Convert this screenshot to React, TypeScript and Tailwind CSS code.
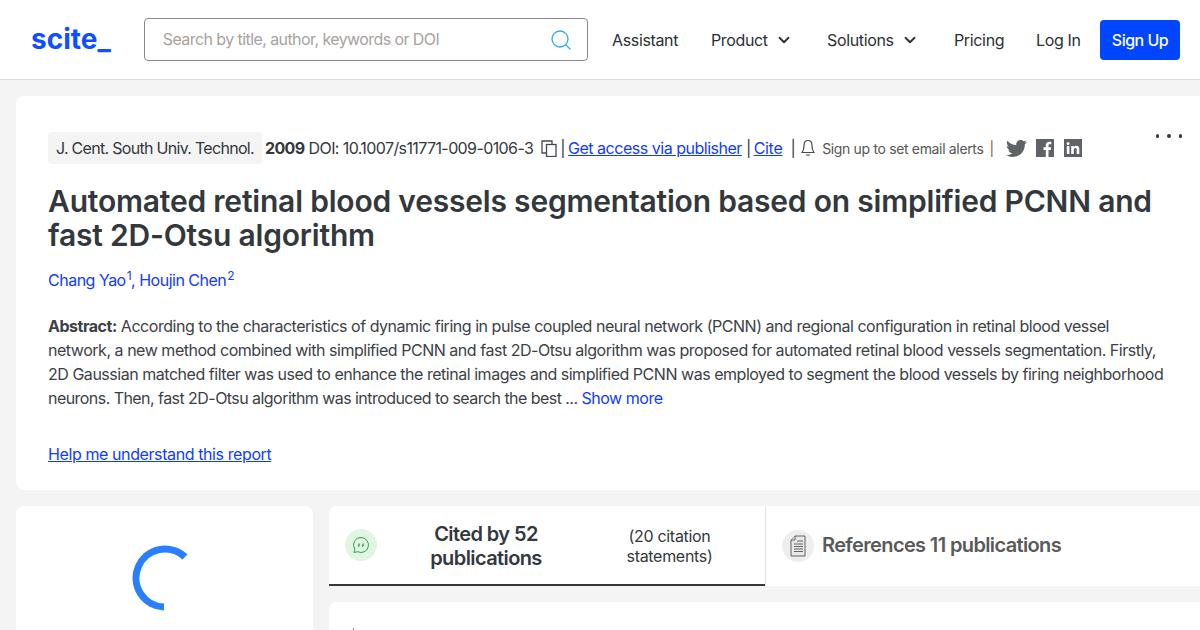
import { Search, ChevronDown } from 'lucide-react';
import { FaTwitter } from 'react-icons/fa';

const font = { fontFamily: 'Inter, sans-serif' };

function Header() {
  return (
    <header className="h-[80px] bg-white border-b border-[#dcdcdc] flex items-center pl-[31px] pr-5">
      <div className="w-[113px] text-[28px] font-bold text-[#0f4fff] leading-none pb-[2px]">scite_</div>
      <div className="w-[445px] h-[43px] border border-[#8a8a8a] rounded flex items-center justify-between pl-[18px] pr-[14px]">
        <span className="text-[16px] tracking-[-0.58px] text-[#a8a29e] pb-[2px]">Search by title, author, keywords or DOI</span>
        <Search size={24} strokeWidth={1.3} className="text-[#2ea8f5]" />
      </div>
      <nav className="flex items-center ml-[24px] text-[16px] tracking-[-0.35px] text-[#2b2f33]">
        <span className="w-[99px]">Assistant</span>
        <span className="w-[116px] flex items-center">Product <ChevronDown size={18} strokeWidth={2.4} className="ml-[7px]" /></span>
        <span className="w-[127px] flex items-center">Solutions <ChevronDown size={18} strokeWidth={2.4} className="ml-[7px]" /></span>
        <span className="w-[82px]">Pricing</span>
        <span className="w-[64px]">Log In</span>
        <span className="w-[80px] h-[40px] bg-[#0045ff] rounded text-white font-medium tracking-[-0.5px] flex items-center justify-center">Sign Up</span>
      </nav>
    </header>
  );
}

function CopyIcon() {
  return (
    <svg width="16" height="17" viewBox="0 0 16 17" fill="none" stroke="#44494e" strokeWidth="1.3" className="ml-2">
      <path d="M5 13H1V1h10v3" />
      <rect x="5.500" y="4.500" width="9.500" height="12" />
    </svg>
  );
}

function BellIcon() {
  return (
    <svg width="14" height="18" viewBox="0 0 14 18" fill="none" stroke="#44494e" strokeWidth="1.2" className="ml-[6px]">
      <path d="M7 1.500c-2.600 0-3.900 2-3.900 4.400 0 3.400-.6 5.600-2 7.600h11.800c-1.400-2-2-4.200-2-7.600C10.900 3.500 9.600 1.500 7 1.500z" />
      <path d="M5.300 15.500c.4 1 3 1 3.400 0" />
    </svg>
  );
}

function FacebookIcon() {
  return (
    <svg width="18" height="18" viewBox="0 0 18 18" className="ml-[9px]">
      <rect width="18" height="18" fill="#5f6368" />
      <path d="M12.500 18v-7h2.300l.4-2.700h-2.700V6.600c0-.8.3-1.300 1.400-1.300h1.400V2.900c-.3 0-1.100-.1-2-.1-2.100 0-3.500 1.300-3.500 3.500v2H7.500V11h2.300v7z" fill="#fff" />
    </svg>
  );
}

function LinkedinIcon() {
  return (
    <svg width="18" height="18" viewBox="0 0 18 18" className="ml-[10px]">
      <rect width="18" height="18" fill="#5f6368" />
      <path d="M2.800 7h2.600v8H2.800zM4.100 3a1.500 1.500 0 1 1 0 3 1.500 1.500 0 0 1 0-3zM7.200 7h2.500v1.100c.4-.7 1.300-1.300 2.600-1.300 2.500 0 3 1.600 3 3.800V15h-2.600v-3.900c0-1 0-2.100-1.300-2.100s-1.600 1-1.600 2V15H7.200z" fill="#fff" />
    </svg>
  );
}

function MetaRow() {
  return (
    <div className="flex items-center text-[16px] tracking-[-0.6px] text-[#33383d] h-[32px] relative">
      <span className="bg-[#f4f4f4] rounded h-[32px] flex items-center px-2 mr-[3px] tracking-[-0.7px]">J. Cent. South Univ. Technol.</span>
      <span className="font-bold">2009</span>
      <span className="ml-1">DOI: 10.1007/s11771-009-0106-3</span>
      <CopyIcon />
      <span className="ml-[3px]">|</span>
      <a className="ml-[3px] text-[#0f3cff] underline tracking-[-0.48px]">Get access via publisher</a>
      <span className="ml-1">|</span>
      <a className="ml-[3px] text-[#0f3cff] underline tracking-[-0.3px]">Cite</a>
      <span className="ml-2">|</span>
      <BellIcon />
      <span className="ml-[7px] text-[14px] tracking-[-0.34px] text-[#555]">Sign up to set email alerts</span>
      <span className="ml-[6px] text-[14px] text-[#7a5a3a]">|</span>
      <FaTwitter size={21} className="ml-[12px] text-[#5f6368]" />
      <FacebookIcon />
      <LinkedinIcon />
      <div className="absolute right-[-14px] top-[2px] flex gap-[8px]">
        <span className="w-[3.500px] h-[3.500px] rounded-full bg-[#33383d]" />
        <span className="w-[3.500px] h-[3.500px] rounded-full bg-[#33383d]" />
        <span className="w-[3.500px] h-[3.500px] rounded-full bg-[#33383d]" />
      </div>
    </div>
  );
}

function Abstract() {
  return (
    <p className="mt-[22px] mr-[2px] text-[16px] leading-[24px] tracking-[-0.47px] text-[#3c4146]">
      <b>Abstract:</b> According to the characteristics of dynamic firing in pulse coupled neural network (PCNN) and regional configuration in retinal blood vessel network, a new method combined with simplified PCNN and fast 2D-Otsu algorithm was proposed for automated retinal blood vessels segmentation. Firstly, 2D Gaussian matched filter was used to enhance the retinal images and simplified PCNN was employed to segment the blood vessels by firing neighborhood <span className="tracking-[-0.55px]">neurons. Then, fast 2D-Otsu algorithm was introduced to search the best ...</span> <span className="text-[#0f3cff]">Show more</span>
    </p>
  );
}

function Tabs() {
  return (
    <div className="shrink-0 bg-white rounded-tl-lg h-[80px] flex">
      <div className="w-[436px] border-b-2 border-[#33383d] flex items-center pl-4">
        <div className="w-8 h-8 rounded-full bg-[#e0f5e2] flex items-center justify-center shrink-0">
          <svg width="20" height="20" viewBox="0 0 20 20" fill="none" stroke="#2e9e4a" strokeWidth="1">
            <path d="M10 2.500a7.500 7.500 0 1 1-3.400 14.200L3 17.500l.9-3.200A7.500 7.500 0 0 1 10 2.500z" />
            <path d="M8 8.500v2l-.8 1M12 8.500v2l-.8 1" strokeWidth="1.400" />
          </svg>
        </div>
        <div className="w-[218px] pt-[2px] text-center text-[20px] leading-[24px] font-semibold text-[#33383d] tracking-[-0.6px]">Cited by 52<br />publications</div>
        <div className="w-[133px] pt-[2px] ml-2 text-center text-[16px] leading-[20px] text-[#33383d] tracking-[-0.3px]">(20 citation<br />statements)</div>
      </div>
      <div className="flex-1 border-l border-[#e2e2e2] flex items-center pl-4">
        <div className="w-8 h-8 rounded-full bg-[#eeeeee] flex items-center justify-center shrink-0">
          <svg width="18" height="22" viewBox="0 0 18 22" fill="#e8e8e8" stroke="#555" strokeWidth="0.9">
            <path d="M6 1h10v20H2V5z" />
            <path d="M6 1v4H2" />
            <path d="M8 6h6M5 9h9M5 11.500h9M5 14h9M5 16.500h9" fill="none" />
          </svg>
        </div>
        <span className="ml-2 pb-[2px] text-[20px] font-semibold text-[#5a5a5a] tracking-[-0.63px]">References 11 publications</span>
      </div>
    </div>
  );
}

export default function App() {
  return (
    <div className="w-[1200px] h-[630px] overflow-hidden bg-[#f4f4f4]" style={font}>
      <Header />
      <main className="pl-4 pt-4 flex flex-col gap-4">
        <section className="bg-white rounded-l-lg h-[394px] pl-8 pr-[32px] pt-9">
          <MetaRow />
          <h1 className="mt-[20px] text-[30px] leading-[34px] font-semibold text-[#33383d] tracking-[-0.2px]">
            Automated retinal blood vessels segmentation based on simplified PCNN and fast 2D-Otsu algorithm
          </h1>
          <div className="mt-[16px] text-[16px] tracking-[-0.5px] text-[#0f3cff]">
            Chang Yao<sup className="ml-[1px]">1</sup>, Houjin Chen<sup className="ml-[1px]">2</sup>
          </div>
          <Abstract />
          <a className="block mt-[32px] text-[16px] tracking-[-0.4px] text-[#0f3cff] underline">Help me understand this report</a>
        </section>
        <div className="flex gap-4">
          <div className="w-[297px] h-[200px] bg-white rounded-t-lg flex justify-center pt-[39px]">
            <svg width="66" height="66" viewBox="0 0 66 66" fill="none">
              <path d="M53 12 A29 29 0 1 0 32 62" stroke="#2a7fff" strokeWidth="7" />
            </svg>
          </div>
          <div className="flex-1 flex flex-col gap-4">
            <Tabs />
            <div className="bg-white rounded-tl-lg h-[100px] pl-6 pt-[26px]">
              <div className="w-[1px] h-[2px] bg-[#888]" />
            </div>
          </div>
        </div>
      </main>
    </div>
  );
}
